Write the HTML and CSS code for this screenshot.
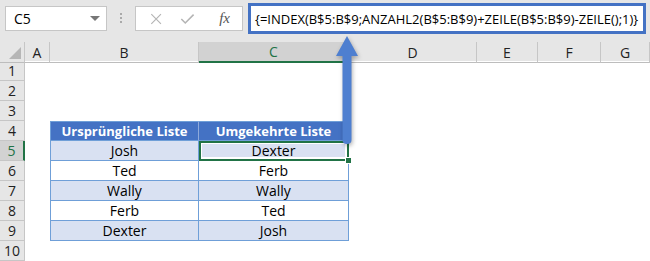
FILE: index.html
```html
<!DOCTYPE html>
<html lang="de">
<head>
  <meta charset="UTF-8" />
  <title>INDEX Liste umkehren</title>
  <link rel="stylesheet" href="styles.css">
</head>
<body>

<div class="window">
  <!-- Formula bar -->
  <div class="topbar">
    <div class="name-box">
      <span>C5</span>
      <span class="drop"></span>
    </div>
    <div class="dots"><i></i><i></i><i></i></div>
    <div class="fx-buttons">
      <svg class="icon" width="14" height="14" viewBox="0 0 14 14">
        <path d="M1.5 1.5 L12.5 12.5 M12.5 1.5 L1.5 12.5" stroke="#b4b4b4" stroke-width="1.3" fill="none" />
      </svg>
      <svg class="icon" width="17" height="14" viewBox="0 0 17 14">
        <path d="M1.5 7 L6 11.5 L15.5 2" stroke="#b4b4b4" stroke-width="1.8" fill="none" />
      </svg>
      <span class="fx">fx</span>
    </div>
    <div class="formula">{=INDEX(B$5:B$9;ANZAHL2(B$5:B$9)+ZEILE(B$5:B$9)-ZEILE();1)}</div>
  </div>

  <!-- Sheet -->
  <div class="sheet">
    <div class="row head-row">
      <div class="corner"></div>
      <div class="col-h">A</div>
      <div class="col-h">B</div>
      <div class="col-h active">C</div>
      <div class="col-h">D</div>
      <div class="col-h">E</div>
      <div class="col-h">F</div>
      <div class="col-h">G</div>
    </div>
    <div class="row"><div class="row-h">1</div></div>
    <div class="row"><div class="row-h">2</div></div>
    <div class="row"><div class="row-h">3</div></div>
    <div class="row">
      <div class="row-h">4</div><div></div>
      <div class="cell th first top">Ursprüngliche Liste</div>
      <div class="cell th top">Umgekehrte Liste</div>
    </div>
    <div class="row">
      <div class="row-h active">5</div><div></div>
      <div class="cell band first">Josh</div>
      <div class="cell band selected">Dexter</div>
    </div>
    <div class="row">
      <div class="row-h">6</div><div></div>
      <div class="cell first">Ted</div>
      <div class="cell">Ferb</div>
    </div>
    <div class="row">
      <div class="row-h">7</div><div></div>
      <div class="cell band first">Wally</div>
      <div class="cell band">Wally</div>
    </div>
    <div class="row">
      <div class="row-h">8</div><div></div>
      <div class="cell first">Ferb</div>
      <div class="cell">Ted</div>
    </div>
    <div class="row">
      <div class="row-h">9</div><div></div>
      <div class="cell band first">Dexter</div>
      <div class="cell band">Josh</div>
    </div>
    <div class="row"><div class="row-h">10</div></div>
  </div>

  <!-- Callout arrow pointing at the formula -->
  <svg class="arrow" width="28" height="114" viewBox="0 0 28 114">
    <path d="M14 2 L25 22 L18.5 22 L18.5 106 Q18.5 110 14 110 Q9.5 110 9.5 106 L9.5 22 L3 22 Z" fill="#4e7fd0" />
  </svg>
</div>

</body>
</html>
```

FILE: styles.css
```css
body {
  margin: 0;
  padding: 0;
  background: #fff;
  font-family: "Open Sans", "Liberation Sans", sans-serif;
  color: #000;
}

.window {
  position: relative;
  width: 650px;
  height: 261px;
  overflow: hidden;
}

/* Formula bar */
.topbar {
  display: flex;
  align-items: flex-start;
  height: 42px;
  background: #e6e6e6;
}

.name-box {
  display: flex;
  align-items: center;
  justify-content: space-between;
  box-sizing: border-box;
  width: 102px;
  height: 25px;
  margin: 6px 0 0 5px;
  padding: 0 6px 0 8px;
  background: #fff;
  border: 1px solid #c6c6c6;
  font-size: 14px;
}

.drop {
  width: 0;
  height: 0;
  border-left: 5px solid transparent;
  border-right: 5px solid transparent;
  border-top: 5px solid #777;
}

.dots {
  display: flex;
  flex-direction: column;
  gap: 2px;
  margin: 13px 13px 0 13px;
}

.dots i {
  width: 2px;
  height: 2px;
  background: #aaa;
}

.fx-buttons {
  display: flex;
  align-items: center;
  box-sizing: border-box;
  width: 108px;
  height: 25px;
  margin-top: 6px;
  padding: 0 12px 0 14px;
  gap: 18px;
  background: #fff;
  border: 1px solid #c6c6c6;
}

.fx {
  margin-left: 6px;
  font-family: "Liberation Serif", serif;
  font-style: italic;
  font-size: 15px;
  color: #555;
}

.formula {
  box-sizing: border-box;
  width: 398px;
  height: 31px;
  margin: 3px 0 0 5px;
  padding: 4px 0 0 4px;
  background: #fff;
  border: 3px solid #4472c4;
  font-size: 13px;
  white-space: nowrap;
  overflow: hidden;
}

/* Sheet grid */
.row {
  display: grid;
  grid-template-columns: 25px 25px 149px 150px 128px 61px 63px 49px;
  height: 20px;
}

.head-row {
  height: 19px;
  background: #e6e6e6;
}

.corner {
  position: relative;
  border-right: 1px solid #c6c6c6;
  border-bottom: 1px solid #bdbdbd;
}

.corner::after {
  content: "";
  position: absolute;
  right: 3px;
  bottom: 3px;
  border-left: 12px solid transparent;
  border-bottom: 12px solid #b6b6b6;
}

.col-h {
  display: flex;
  align-items: center;
  justify-content: center;
  box-sizing: border-box;
  border-right: 1px solid #c6c6c6;
  border-bottom: 1px solid #bdbdbd;
  font-size: 14px;
  color: #222;
}

.col-h.active {
  background: #d2d2d2;
  border-bottom: 2px solid #217346;
  color: #217346;
}

.row-h {
  display: flex;
  align-items: center;
  justify-content: center;
  box-sizing: border-box;
  background: #e6e6e6;
  border-right: 1px solid #c6c6c6;
  border-bottom: 1px solid #c6c6c6;
  font-size: 14px;
  color: #222;
}

.row-h.active {
  background: #d2d2d2;
  border-right: 2px solid #217346;
  color: #217346;
}

/* Table */
.cell {
  display: flex;
  align-items: center;
  justify-content: center;
  box-sizing: border-box;
  border-right: 1px solid #6f9fd8;
  border-bottom: 1px solid #6f9fd8;
  font-size: 14px;
}

.cell.first {
  border-left: 1px solid #6f9fd8;
}

.cell.top {
  border-top: 1px solid #6f9fd8;
}

.cell.th {
  background: #4472c4;
  color: #fff;
  font-weight: bold;
  font-size: 13px;
}

.cell.th.first {
  border-right-color: #8eaadb;
}

.cell.band {
  background: #d9e1f2;
}

.cell.selected {
  position: relative;
  outline: 2px solid #217346;
  outline-offset: -2px;
  box-shadow: inset 0 0 0 3px #fff;
}

.cell.selected::after {
  content: "";
  position: absolute;
  right: -4px;
  bottom: -4px;
  width: 5px;
  height: 5px;
  background: #217346;
  border: 1px solid #fff;
}

.arrow {
  position: absolute;
  left: 333px;
  top: 34px;
  filter: drop-shadow(1px 2px 2px rgba(0, 0, 0, 0.3));
}
```
